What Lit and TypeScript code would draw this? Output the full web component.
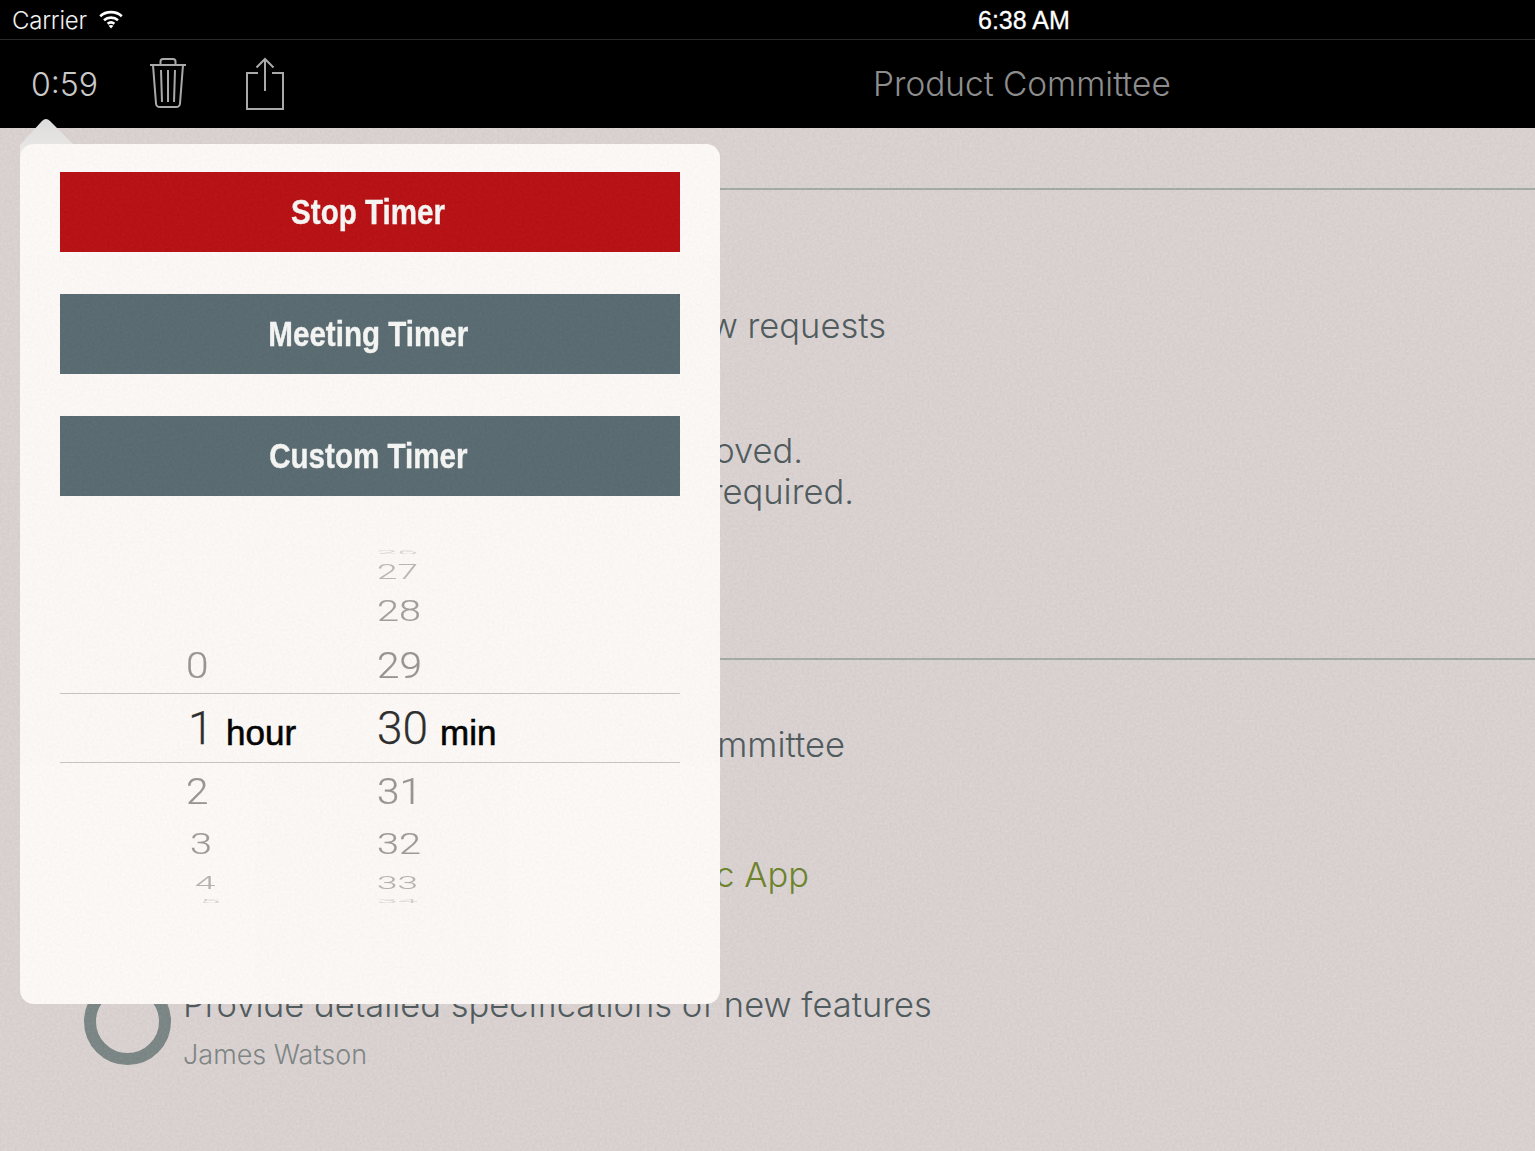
import { LitElement, html, css } from "lit";
import { customElement } from "lit/decorators.js";

const ROWS = [
  { h: "", hx: 0, m: "26", sx: 0.8, sy: 0.12, o: 0.4, rh: 18 },
  { h: "", hx: 0, m: "27", sx: 0.8, sy: 0.42, o: 0.65, rh: 22 },
  { h: "", hx: 0, m: "28", sx: 0.86, sy: 0.66, o: 0.9, rh: 54 },
  { h: "0", hx: 0, m: "29", sx: 0.88, sy: 0.82, o: 1, rh: 56 },
  { h: "1", hx: 2, m: "30", sx: 1, sy: 1, o: 1, rh: 70, on: true },
  { h: "2", hx: 0, m: "31", sx: 0.88, sy: 0.82, o: 1, rh: 55 },
  { h: "3", hx: 4, m: "32", sx: 0.86, sy: 0.64, o: 0.95, rh: 52 },
  { h: "4", hx: 9, m: "33", sx: 0.8, sy: 0.4, o: 0.7, rh: 26 },
  { h: "5", hx: 14, m: "34", sx: 0.8, sy: 0.1, o: 0.4, rh: 10 },
];

@customElement("app-root")
export class AppRoot extends LitElement {
  static styles = css`
    :host { display: block; width: 1535px; height: 1151px; overflow: hidden; position: relative; background: #000; }
    * { box-sizing: border-box; }
    .status { height: 40px; background: #000; border-bottom: 1px solid #2a2a2a; color: #fff; display: flex; align-items: center; font-family: "Liberation Sans", sans-serif; padding-top: 1px; }
    .carrier { font-size: 24px; margin-left: 12px; width: 966px; display: flex; align-items: center; gap: 12px; color: #f0f0f0; font-family: Inter, sans-serif; font-weight: 300; letter-spacing: -0.25px; }
    .carrier svg { display: block; margin-top: -2px; }
    .time { font-size: 25px; font-weight: 400; -webkit-text-stroke: 0.3px #fff; }
    .nav { height: 88px; background: #000; display: flex; align-items: center; font-family: Inter, sans-serif; font-weight: 300; color: #c9c9c9; }
    .clock { font-size: 32px; margin-left: 31px; width: 119px; }
    .nav svg { display: block; }
    .trash { width: 36px; height: 52px; }
    .share { width: 40px; height: 54px; margin-left: 59px; }
    .title { font-size: 33.4px; color: #8d8d8d; margin-left: 588px; white-space: nowrap; }
    main { height: 1023px; position: relative; overflow: hidden; background: #ded6d5; font-family: Inter, sans-serif; font-weight: 300; color: #4f5a5d; font-size: 34.5px; line-height: 41px; }
    .rule { height: 2px; background: #a5aea9; margin-left: 84px; }
    .rule.first { margin-top: 60px; }
    .rowtext { margin-left: 184px; white-space: nowrap; display: flex; flex-direction: column; align-items: flex-end; }
    .r1 { margin-top: 115px; }
    .r2 { margin-top: 84px; align-items: flex-start; }
    .r2 div { text-align: right; }
    .r3 { margin-top: 146px; }
    .r4 { margin-top: 64px; }
    .r5 { margin-top: 89px; color: #6d8429; }
    .task { display: flex; margin: 89px 0 0 84px; }
    .ring { width: 87px; height: 87px; border-radius: 50%; border: 12px solid #7b8786; margin-top: -6px; margin-right: 12px; flex: none; }
    .task .sub { font-size: 27px; line-height: 34px; color: #7f8685; margin-top: 13px; }
    .task .name { white-space: nowrap; }
    .grain { position: absolute; inset: 0; width: 100%; height: 100%; pointer-events: none; opacity: 0.05; }
    .pop .grain { opacity: 0.03; }
    .arrow { position: absolute; left: 20px; top: 118px; width: 56px; height: 40px; }
    .pop { position: absolute; left: 20px; top: 144px; width: 700px; height: 860px; border-radius: 14px; background: #fffbf8; padding: 28px 40px; overflow: hidden; }
    .btn { height: 80px; background: #596b72; color: #f8f8f6; display: flex; align-items: center; justify-content: center; margin-bottom: 42px; font-family: "Liberation Sans", sans-serif; font-weight: 700; font-size: 35px; }
    .btn span { display: block; transform: scaleX(0.845); white-space: nowrap; margin-left: -3px; -webkit-text-stroke: 0.4px #f8f8f6; }
    .btn.stop { background: #b90f12; }
    .picker { margin-top: 47px; font-family: Roboto, sans-serif; font-weight: 300; font-size: 46px; color: #989694; -webkit-text-stroke: 0.25px currentColor; }
    .prow { display: flex; align-items: center; line-height: 1; }
    .prow.on { border-top: 1px solid #c9c6c3; border-bottom: 1px solid #c9c6c3; color: #2c2c2c; }
    .hcell { width: 191px; margin-left: 126px; display: flex; align-items: baseline; flex: none; }
    .mcell { display: flex; align-items: baseline; }
    .num { display: inline-block; transform-origin: left center; white-space: nowrap; }
    .hcell .num { width: 40px; }
    .mcell .num { width: 63px; }
    .unit { font-family: "Liberation Sans", sans-serif; font-size: 35px; color: #000; -webkit-text-stroke: 0.6px #000; transform: translateY(1px); }
  `;

  private grain(id: string) {
    return html`<svg class="grain" aria-hidden="true">
      <filter id=${id} color-interpolation-filters="sRGB"><feTurbulence type="fractalNoise" baseFrequency="0.4" numOctaves="3" seed="4"></feTurbulence><feColorMatrix type="matrix" values="1 0 0 0 0 1 0 0 0 0 1 0 0 0 0 0 0 0 0 1"></feColorMatrix></filter>
      <rect width="100%" height="100%" filter="url(#${id})"></rect>
    </svg>`;
  }

  render() {
    return html`
      <div class="status">
        <div class="carrier">Carrier
          <svg width="24" height="20" viewBox="0 0 24 20" fill="none" stroke="#fff" stroke-width="2.6">
            <path d="M1.200 7.200C7 1.800 17 1.800 22.800 7.200"></path>
            <path d="M5 11.200C8.800 7.800 15.200 7.800 19 11.200"></path>
            <path d="M8.600 14.800C10.600 13.200 13.400 13.200 15.400 14.800"></path>
            <path d="M12 19.400 9.600 16.800C11 15.800 13 15.800 14.400 16.800Z" fill="#fff" stroke="none"></path>
          </svg>
        </div>
        <div class="time">6:38 AM</div>
      </div>
      <div class="nav">
        <div class="clock">0:59</div>
        <svg class="trash" viewBox="0 0 36 52" fill="none" stroke="#a9a9a9" stroke-width="2">
          <path d="M0 7H36"></path>
          <path d="M10.500 6.500V3.500Q10.500 1 13 1H23Q25.500 1 25.500 3.500V6.500"></path>
          <path d="M3 7 6 45.500Q6.300 49 10 49H26Q29.700 49 30 45.500L33 7"></path>
          <path d="M11 12 12 44M18 12V44M25 12 24 44"></path>
        </svg>
        <svg class="share" viewBox="0 0 40 54" fill="none" stroke="#a9a9a9" stroke-width="2">
          <path d="M13 16H2V52H38V16H27"></path>
          <path d="M20 34V2"></path>
          <path d="M11.500 10.500 20 2 28.500 10.500"></path>
        </svg>
        <div class="title">Product Committee</div>
      </div>
      <main>
        <div class="rule first"></div>
        <div class="rowtext r1" style="width:${886 - 184}px">Review new requests</div>
        <div class="rowtext r2">
          <div style="width:${803 - 184}px">Approved.</div>
          <div style="width:${854 - 184}px">Follow-up required.</div>
        </div>
        <div class="rule r3"></div>
        <div class="rowtext r4" style="width:${845 - 184}px">Committee</div>
        <div class="rowtext r5" style="width:${809 - 184}px">Public App</div>
        <div class="task">
          <div class="ring"></div>
          <div>
            <div class="name">Provide detailed specifications of new features</div>
            <div class="sub">James Watson</div>
          </div>
        </div>
        ${this.grain("g1")}
      </main>
      <svg class="arrow" viewBox="0 0 56 40" aria-hidden="true">
        <defs><linearGradient id="ag" x1="0" y1="0" x2="0" y2="1"><stop offset="0" stop-color="#dcdcdc"></stop><stop offset="1" stop-color="#eeeae8"></stop></linearGradient></defs>
        <path d="M0 40V27L22 3Q26 -1 30 3L54 27V40Z" fill="url(#ag)"></path>
      </svg>
      <div class="pop">
        <div class="btn stop"><span>Stop Timer</span></div>
        <div class="btn"><span>Meeting Timer</span></div>
        <div class="btn"><span>Custom Timer</span></div>
        <div class="picker">
          ${ROWS.map(
            (r) => html`<div class="prow ${r.on ? "on" : ""}" style="height:${r.rh}px;opacity:${r.o}">
              <div class="hcell">
                <span class="num" style="transform:translateX(${r.hx}px) scale(${r.sx},${r.sy})">${r.h}</span>
                ${r.on ? html`<span class="unit">hour</span>` : ""}
              </div>
              <div class="mcell">
                <span class="num" style="transform:scale(${r.sx},${r.sy})">${r.m}</span>
                ${r.on ? html`<span class="unit">min</span>` : ""}
              </div>
            </div>`
          )}
        </div>
        ${this.grain("g2")}
      </div>
    `;
  }
}
